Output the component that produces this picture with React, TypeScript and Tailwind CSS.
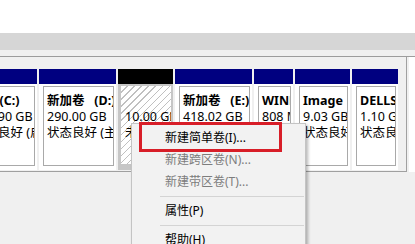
const font = "font-['Noto_Sans','Noto_Sans_CJK_SC',sans-serif]";

type Volume = {
  key: string;
  width: string;
  title: string;
  size: string;
  status: string;
};

const volumes: Volume[] = [
  { key: "d", width: "w-[77px]", title: "新加卷   (D:)", size: "290.00 GB", status: "状态良好 (主分区)" },
];

const rightVolumes: Volume[] = [
  { key: "e", width: "w-[77px]", title: "新加卷   (E:)", size: "418.02 GB", status: "状态良好 (主分区)" },
  { key: "win", width: "w-[39px]", title: "WINRETOOLS", size: "808 MB", status: "状态良好 (OEM 分区)" },
  { key: "img", width: "w-[55px]", title: "Image", size: "9.03 GB", status: "状态良好 (OEM 分区)" },
  { key: "dell", width: "w-[46px]", title: "DELLSUPPORT", size: "1.10 GB", status: "状态良好 (OEM 分区)" },
];

function VolumeBox({ v }: { v: Volume }) {
  return (
    <div className={`${v.width} shrink-0 flex flex-col`}>
      <div className="h-[15px] bg-[#000080]" />
      <div className="h-[86px] bg-white pl-[4px] pr-[2px] pt-[2px] pb-[4px]">
        <div className="h-full border border-[#a9a9a9] overflow-hidden px-[3px] pt-[6px] text-[12.5px] leading-[16px] text-black whitespace-pre">
          <div className="font-bold">{v.title}</div>
          <div>{v.size}</div>
          <div>{v.status}</div>
        </div>
      </div>
    </div>
  );
}

function MenuItem({ label, disabled }: { label: string; disabled?: boolean }) {
  return (
    <div
      className={`h-[22px] flex items-center pl-[33px] text-[12px] ${
        disabled ? "text-[#7d7d7d]" : "text-black"
      }`}
    >
      {label}
    </div>
  );
}

function Separator() {
  return (
    <div className="h-[7px] flex items-center pl-[28px] pr-[1px]">
      <div className="h-px w-full bg-[#d4d4d4]" />
    </div>
  );
}

export default function App() {
  return (
    <div className={`relative w-[415px] h-[244px] overflow-hidden bg-[#f0f0f0] ${font}`}>
      <div className="h-[33px] bg-white" />
      <div className="h-[17px] bg-[#d6d6d6]" />
      <div className="h-[6px] bg-[#f0f0f0]" />
      <div className="h-px bg-[#9c9c9c]" />

      <div className="flex">
        <div className="w-[407px] border-r border-b border-[#a0a0a0] pt-[12px] flex gap-[2px]">
          {/* C: partly scrolled out to the left */}
          <div className="w-[72px] ml-[-35px] shrink-0 flex flex-col">
            <div className="h-[15px] bg-[#000080]" />
            <div className="h-[86px] bg-white pl-[4px] pr-[2px] pt-[2px] pb-[4px]">
              <div className="h-full border border-[#a9a9a9] overflow-hidden px-[3px] pt-[6px] text-[12.5px] leading-[16px] text-black whitespace-pre">
                <div className="font-bold">{"OS   (C:)"}</div>
                <div>202.90 GB</div>
                <div>状态良好 (启动, 页面文件)</div>
              </div>
            </div>
          </div>

          {volumes.map((v) => (
            <VolumeBox key={v.key} v={v} />
          ))}

          {/* unallocated, selected */}
          <div className="w-[55px] shrink-0 flex flex-col">
            <div className="h-[15px] bg-black" />
            <div className="h-[86px] bg-[#c6c6c6] pl-[3px] pr-[2px] pt-[2px] pb-[6px]">
              <div className="h-full overflow-hidden px-[4px] pt-[7px] text-[12.5px] leading-[16px] text-black whitespace-pre bg-[repeating-linear-gradient(135deg,#ffffff_0px,#ffffff_4px,#c0c0c0_4px,#c0c0c0_5px)]">
                <div>&nbsp;</div>
                <div>10.00 GB</div>
                <div>未分配</div>
              </div>
            </div>
          </div>

          {rightVolumes.map((v) => (
            <VolumeBox key={v.key} v={v} />
          ))}
        </div>
        <div className="flex-1 h-[115px] bg-white border-l-[2px] border-[#f0f0f0]" />
      </div>

      {/* context menu */}
      <div className="absolute left-[131px] top-[123px] w-[175px] h-[140px] bg-[#f2f2f2] border border-[#c4c4c4] shadow-[2px_2px_3px_rgba(0,0,0,0.28)] pt-[3px]">
        <MenuItem label="新建简单卷(I)..." />
        <MenuItem label="新建跨区卷(N)..." disabled />
        <MenuItem label="新建带区卷(T)..." disabled />
        <Separator />
        <MenuItem label="属性(P)" />
        <Separator />
        <MenuItem label="帮助(H)" />
      </div>

      {/* highlight */}
      <div className="absolute left-[139px] top-[122px] w-[143px] h-[30px] border-[3px] border-[#d81e28]" />
    </div>
  );
}
